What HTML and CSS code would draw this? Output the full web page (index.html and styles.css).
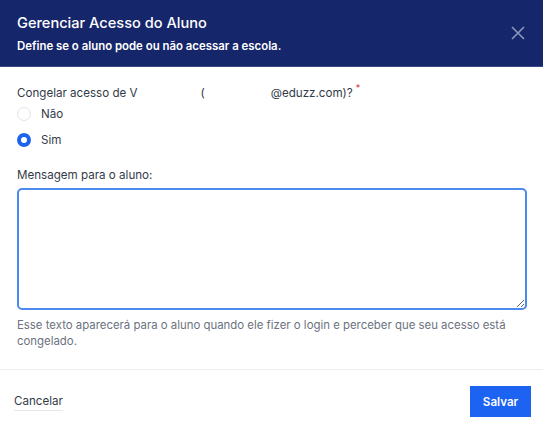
FILE: index.html
```html
<!DOCTYPE html>
<html lang="pt-BR">
<head>
<meta charset="utf-8">
<link rel="stylesheet" href="styles.css">
</head>
<body>
<div class="modal">
  <header class="header">
    <div class="header-text">
      <h1 class="title">Gerenciar Acesso do Aluno</h1>
      <p class="subtitle">Define se o aluno pode ou não acessar a escola.</p>
    </div>
    <button class="close" aria-label="Fechar">
      <svg width="14" height="14" viewBox="0 0 14 14"><path d="M1 1L13 13M13 1L1 13" stroke="#8d97bd" stroke-width="1.6" fill="none"/></svg>
    </button>
  </header>
  <main class="body">
    <div class="question">Congelar acesso de V<span class="redact r1"></span>(<span class="redact r2"></span>@eduzz.com)?<span class="req">*</span></div>
    <div class="radios">
      <label class="radio"><span class="dot"></span>Não</label>
      <label class="radio"><span class="dot checked"></span>Sim</label>
    </div>
    <div class="field-label">Mensagem para o aluno:</div>
    <textarea class="textarea"></textarea>
    <p class="help">Esse texto aparecerá para o aluno quando ele fizer o login e perceber que seu acesso está congelado.</p>
  </main>
  <footer class="footer">
    <button class="cancel">Cancelar</button>
    <button class="save">Salvar</button>
  </footer>
</div>
</body>
</html>
```

FILE: styles.css
```css
* { box-sizing: border-box; }
html, body { margin: 0; padding: 0; background: #fff; }
body { font-family: Inter, "Noto Sans", sans-serif; color: #374151; }
.modal { width: 543px; height: 431px; display: flex; flex-direction: column; }
.header {
  background: #16266b;
  height: 67px;
  display: flex;
  align-items: center;
  justify-content: space-between;
  padding: 0 18px 0 17px;
  border-bottom: 1px solid #3a4a86;
}
.title { margin: 0; font-size: 14.6px; font-weight: 500; color: #fff; line-height: 20px; }
.subtitle { margin: 5px 0 0; font-size: 11.4px; font-weight: 600; color: #fff; line-height: 16px; }
.close { background: none; border: 0; padding: 0; width: 14px; height: 14px; display: flex; }
.body { padding: 18px 17px 0 17px; }
.question { font-size: 11.6px; line-height: 16px; color: #333b48; display: flex; align-items: flex-start; }
.redact { display: inline-block; height: 1px; }
.r1 { width: 63px; }
.r2 { width: 66px; }
.req { color: #e02424; font-size: 9px; line-height: 10px; margin-left: 3px; margin-top: -2px; }
.radios { display: flex; flex-direction: column; gap: 10px; margin-top: 5px; }
.radio { display: flex; align-items: center; gap: 10px; font-size: 11.6px; line-height: 16px; color: #333b48; }
.dot { width: 14px; height: 14px; border-radius: 50%; border: 1px solid #e2e4e8; background: #fff; }
.dot.checked { border: 4px solid #1f63eb; }
.field-label { margin-top: 19px; font-size: 11.6px; line-height: 16px; color: #333b48; }
.textarea {
  display: block;
  margin-top: 5px;
  width: 510px;
  height: 122px;
  border: 2px solid #4d8af0;
  border-radius: 5px;
  resize: vertical;
  outline: none;
  font-family: inherit;
}
.help { margin: 7px 0 0; font-size: 11.4px; line-height: 16px; color: #6b7280; }
.footer {
  margin-top: auto;
  border-top: 1px solid #eceef1;
  height: 62px;
  display: flex;
  align-items: center;
  justify-content: space-between;
  padding: 0 12px 0 14px;
}
.cancel {
  background: none; border: 0; padding: 0 0 2px;
  font-family: inherit; font-size: 11.6px; color: #333b48;
  border-bottom: 1px solid #e5e7eb;
  margin-top: 4px;
}
.save {
  background: #1d63f2; color: #fff; border: 0;
  width: 61px; height: 31px;
  font-family: inherit; font-size: 11.6px; font-weight: 600;
  margin-top: 2px;
}
```
